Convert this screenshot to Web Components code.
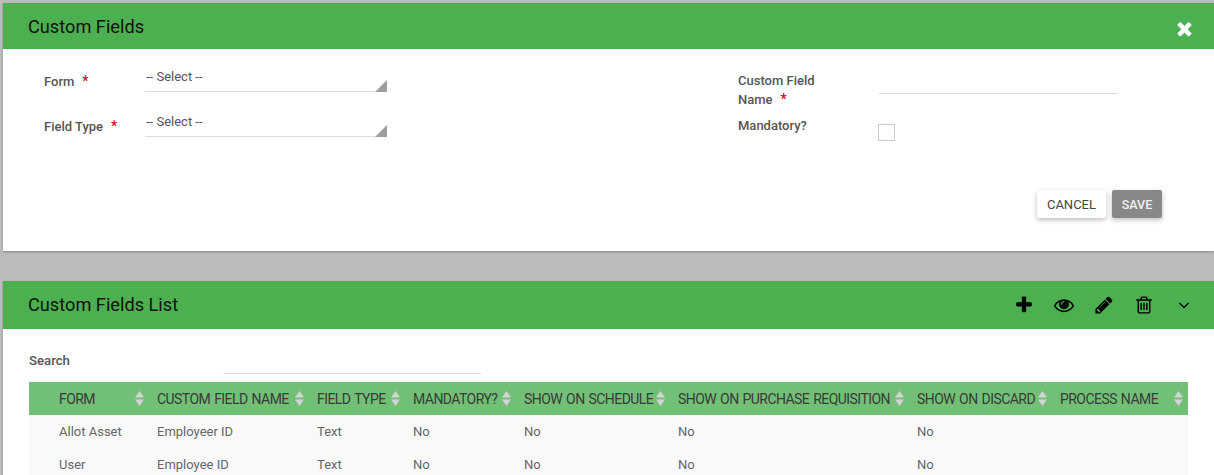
<!DOCTYPE html>
<html><head><meta charset="utf-8"><title>Custom Fields</title>
<style>
html,body{margin:0;height:475px;overflow:hidden;background:#bbb}
body{padding:3px 0 0 3px;box-sizing:border-box;font-family:Roboto,sans-serif;display:flex;flex-direction:column;gap:30px}
</style></head><body>
<x-card style="--bar:46px;--body:202px;--tfs:18.2px;--tshift:0px">
  <span slot="title">Custom Fields</span>
  <x-icon slot="actions" name="times" style="--s:21px;color:#fff;margin-right:19px;margin-top:4px"></x-icon>
  <x-form></x-form>
</x-card>
<x-card style="--bar:48px;--body:auto;--tfs:18.2px;--tshift:-2px">
  <span slot="title">Custom Fields List</span>
  <x-icon slot="actions" name="plus" style="--s:20px;margin-right:20px"></x-icon>
  <x-icon slot="actions" name="eye" style="--s:20px;margin-right:20px;"></x-icon>
  <x-icon slot="actions" name="pencil" style="--s:20px;margin-right:20px;"></x-icon>
  <x-icon slot="actions" name="trash" style="--s:20px;margin-right:20px;"></x-icon>
  <x-icon slot="actions" name="chev" style="--s:20px;margin-right:20px"></x-icon>
  <x-list></x-list>
</x-card>
<script>
const P={
times:'M1490 1322q0 40-28 68l-136 136q-28 28-68 28t-68-28l-294-294-294 294q-28 28-68 28t-68-28l-136-136q-28-28-28-68t28-68l294-294-294-294q-28-28-28-68t28-68l136-136q28-28 68-28t68 28l294 294 294-294q28-28 68-28t68 28l136 136q28 28 28 68t-28 68l-294 294 294 294q28 28 28 68z',
plus:'M1600 736v192q0 40-28 68t-68 28h-416v416q0 40-28 68t-68 28h-192q-40 0-68-28t-28-68v-416h-416q-40 0-68-28t-28-68v-192q0-40 28-68t68-28h416v-416q0-40 28-68t68-28h192q40 0 68 28t28 68v416h416q40 0 68 28t28 68z',
eye:'M1664 960q-152-236-381-353 61 104 61 225 0 185-131.5 316.5t-316.5 131.5-316.5-131.5-131.5-316.5q0-121 61-225-229 117-381 353 133 205 333.5 326.5t434.5 121.5 434.5-121.5 333.5-326.5zm-720-384q0-20-14-34t-34-14q-125 0-214.5 89.5t-89.5 214.5q0 20 14 34t34 14 34-14 14-34q0-86 61-147t147-61q20 0 34-14t14-34zm848 384q0 34-20 69-140 230-376.5 368.5t-499.5 138.5-499.5-139-376.5-368q-20-35-20-69t20-69q140-229 376.5-368t499.5-139 499.5 139 376.5 368q20 35 20 69z',
pencil:'M491 1536l91-91-235-235-91 91v107h128v128h107zm523-928q0-22-22-22-10 0-17 7l-542 542q-7 7-7 17 0 22 22 22 10 0 17-7l542-542q7-7 7-17zm-54-192l416 416-832 832h-416v-416zm683 96q0 53-37 90l-166 166-416-416 166-165q36-38 90-38 53 0 91 38l235 234q37 39 37 91z',
trash:'M704 736v576q0 14-9 23t-23 9h-64q-14 0-23-9t-9-23v-576q0-14 9-23t23-9h64q14 0 23 9t9 23zm256 0v576q0 14-9 23t-23 9h-64q-14 0-23-9t-9-23v-576q0-14 9-23t23-9h64q14 0 23 9t9 23zm256 0v576q0 14-9 23t-23 9h-64q-14 0-23-9t-9-23v-576q0-14 9-23t23-9h64q14 0 23 9t9 23zm128 724v-948h-896v948q0 22 7 40.5t14.5 27 10.5 8.5h832q3 0 10.5-8.5t14.5-27 7-40.5zm-672-1076h448l-48-117q-7-9-17-11h-317q-10 2-17 11zm928 32v64q0 14-9 23t-23 9h-96v948q0 83-47 143.5t-113 60.5h-832q-66 0-113-58.5t-47-141.5v-952h-96q-14 0-23-9t-9-23v-64q0-14 9-23t23-9h309l70-167q15-37 54-63t79-26h320q40 0 79 26t54 63l70 167h309q14 0 23 9t9 23z'};
function def(n,html){customElements.define(n,class extends HTMLElement{connectedCallback(){if(this.shadowRoot)return;const s=this.attachShadow({mode:'open'});s.innerHTML=typeof html==='function'?html(this):html;}})}
def('x-icon',h=>{const n=h.getAttribute('name');
 const inner=n==='chev'?'<svg viewBox="0 0 20 20"><path d="M5.5 8 10 12.5 14.5 8" fill="none" stroke="currentColor" stroke-width="1.3"/></svg>':`<svg viewBox="0 0 1792 1792"><path fill="currentColor" d="${P[n]}"/></svg>`;
 return `<style>:host{display:inline-flex;width:var(--s);height:var(--s);color:#000}svg{width:100%;height:100%;display:block}</style>${inner}`});
def('x-card',`<style>
:host{display:block;background:#fff;box-shadow:0 1px 2px rgba(0,0,0,.3)}
header{height:var(--bar);background:#4caf50;display:flex;align-items:center;padding-left:25px;box-sizing:border-box;color:#111;font-size:var(--tfs)}
.t{flex:1;padding-bottom:calc(0px - var(--tshift))}.a{display:flex;align-items:center}
main{height:var(--body);box-sizing:border-box}
</style><header><div class="t"><slot name="title"></slot></div><div class="a"><slot name="actions"></slot></div></header><main><slot></slot></main>`);
def('x-label',h=>`<style>:host{display:block;font:500 13px/19px Roboto,sans-serif;color:#555}
b{color:#e0001b;font-weight:500;font-size:14px;margin-left:8px}</style><slot></slot>${h.hasAttribute('req')?'<b>*</b>':''}`);
def('x-select',`<style>:host{display:block;width:242px;height:24px;box-sizing:border-box;border-bottom:1px solid #ddd;position:relative;font:13px/17px Roboto,sans-serif;color:#555;padding-left:1px}
i{position:absolute;right:0;bottom:-1px;border-style:solid;border-width:0 0 12px 12px;border-color:transparent transparent #9e9e9e transparent}</style><slot></slot><i></i>`);
def('x-row',`<style>:host{display:grid;grid-template-columns:var(--lw) auto;align-items:start}</style><slot></slot>`);
def('x-form',`<style>:host{display:block;height:202px;box-sizing:border-box;padding:19px 52px 0 41px;font:13px Roboto,sans-serif}
.cols{display:flex;height:122px}
.left{width:343px;margin-right:351px;display:flex;flex-direction:column;gap:21px;--lw:101px}
.left x-label{margin-top:4px}
.right{display:flex;flex-direction:column;gap:7px;--lw:140px;padding-top:3px}
.inp{width:241px;height:23px;box-sizing:border-box;border-bottom:1px solid #ddd;border-radius:0 0 2px 2px}
.cb{width:17px;height:17px;box-sizing:border-box;border:1px solid #ccc;margin-top:8px}
.btns{display:flex;justify-content:flex-end;gap:6px}
button{font:13px Roboto,sans-serif;height:28px;border:0;border-radius:2px;padding:0 10px;box-shadow:0 2px 5px rgba(0,0,0,.26);margin:0}
.c{background:#fff;color:#444}.s{background:#888;color:#f2f2f2;font-weight:500;font-size:12.5px;width:50px;padding:0}
</style>
<div class="cols">
<div class="left">
 <x-row><x-label req>Form</x-label><x-select>-- Select --</x-select></x-row>
 <x-row><x-label req>Field Type</x-label><x-select>-- Select --</x-select></x-row>
</div>
<div class="right">
 <x-row><x-label req>Custom Field<br>Name</x-label><div class="inp"></div></x-row>
 <x-row><x-label>Mandatory?</x-label><div class="cb"></div></x-row>
</div>
</div>
<div class="btns"><button class="c">CANCEL</button><button class="s">SAVE</button></div>`);
const cols=['FORM','CUSTOM FIELD NAME','FIELD TYPE','MANDATORY?','SHOW ON SCHEDULE','SHOW ON PURCHASE REQUISITION','SHOW ON DISCARD','PROCESS NAME'];
const rows=[['Allot Asset','Employeer ID','Text','No','No','No','No',''],['User','Employee ID','Text','No','No','No','No','']];
const sort='<svg width="9" height="15" viewBox="0 0 9 15"><path fill="#d4d4d4" d="M4.5 0 9 6.5H0zM0 8.5h9L4.5 15z"/></svg>';
def('x-list',`<style>:host{display:block;padding:22px 26px 0 26px;font:13px Roboto,sans-serif;color:#666}
.s{display:flex;height:31px}
.s label{font:500 13.2px/19px Roboto,sans-serif;color:#555;width:194px}
.s div{width:259px;height:22px;border-bottom:1px solid #ddd;border-radius:0 0 2px 2px}
.tb{display:grid;grid-template-columns:128px 160px 96px 111px 154px 239px 143px 128px}
.h{height:33px;background:#72c076;color:#3a3a3a;display:flex;align-items:center;justify-content:space-between;padding-right:13px;box-sizing:border-box;white-space:nowrap;font-size:14px;letter-spacing:-.55px;word-spacing:1px}
.c{height:33px;background:#f9f9f9;line-height:33px}
.f{padding-left:30px}
svg{flex:none}
</style><div class="s"><label>Search</label><div></div></div>
<div class="tb">${cols.map((c,i)=>`<div class="h ${i?'':'f'}"${i==7?' style="padding-right:5px"':''}><span>${c}</span>${sort}</div>`).join('')}${rows.flat().map((c,i)=>`<div class="c ${i%8?'':'f'}">${c}</div>`).join('')}</div>`);
</script>
</body></html>
